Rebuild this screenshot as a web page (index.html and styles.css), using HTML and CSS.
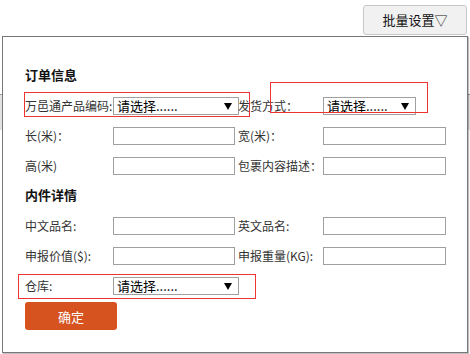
FILE: index.html
```html
<!DOCTYPE html>
<html lang="zh-CN">
<head>
<meta charset="utf-8">
<title>批量设置</title>
<link rel="stylesheet" href="styles.css">
</head>
<body>
<div class="page">
  <div class="backdrop"></div>
  <div class="toolbar">
    <button class="batch-btn">批量设置▽</button>
  </div>
  <div class="dialog">
    <div class="section-title">订单信息</div>
    <div class="form-grid">
      <label class="lbl">万邑通产品编码:</label>
      <div class="select sel-wide"><span>请选择......</span><svg class="arrow" width="8" height="7" viewBox="0 0 8 7"><path d="M0 0H8L4 7Z" fill="#000"/></svg></div>
      <label class="lbl">发货方式：</label>
      <div class="select sel-narrow"><span>请选择......</span><svg class="arrow" width="8" height="7" viewBox="0 0 8 7"><path d="M0 0H8L4 7Z" fill="#000"/></svg></div>

      <label class="lbl">长(米)：</label>
      <input class="inp inp1" type="text">
      <label class="lbl">宽(米)：</label>
      <input class="inp inp2" type="text">

      <label class="lbl">高(米)</label>
      <input class="inp inp1" type="text">
      <label class="lbl">包裹内容描述：</label>
      <input class="inp inp2" type="text">
    </div>
    <div class="section-title section-title2">内件详情</div>
    <div class="form-grid">
      <label class="lbl">中文品名:</label>
      <input class="inp inp1" type="text">
      <label class="lbl">英文品名:</label>
      <input class="inp inp2" type="text">

      <label class="lbl">申报价值($):</label>
      <input class="inp inp1" type="text">
      <label class="lbl">申报重量(KG):</label>
      <input class="inp inp2" type="text">

      <label class="lbl">仓库:</label>
      <div class="select sel-wide"><span>请选择......</span><svg class="arrow" width="8" height="7" viewBox="0 0 8 7"><path d="M0 0H8L4 7Z" fill="#000"/></svg></div>
    </div>
    <button class="ok-btn">确定</button>
  </div>
  <div class="mark mark1"></div>
  <div class="mark mark2"></div>
  <div class="mark mark3"></div>
</div>
</body>
</html>
```
FILE: styles.css
```css
* { box-sizing: border-box; }
html, body { margin: 0; padding: 0; background: #fff; }
body {
  font-family: "Noto Sans CJK SC", "Liberation Sans", sans-serif;
  font-size: 12px;
  color: #333;
}
.page {
  position: relative;
  width: 470px;
  height: 354px;
  overflow: hidden;
}
.backdrop {
  position: absolute;
  left: 0;
  right: 0;
  top: 94px;
  height: 36px;
  background: #e2e2e2;
  border-top: 1px solid #9a9a9a;
  z-index: 0;
}
.toolbar {
  display: flex;
  justify-content: flex-end;
  padding: 5px 3px 0 0;
  height: 36px;
}
.batch-btn {
  width: 104px;
  height: 30px;
  background: #f1f1f1;
  border: 1px solid #c8c8c8;
  border-radius: 3px;
  font-family: "Noto Sans CJK SC", sans-serif;
  font-size: 13px;
  color: #111;
  padding: 0;
  line-height: 28px;
}
.dialog {
  position: relative;
  z-index: 1;
  margin-left: 2px;
  width: 466px;
  height: 317px;
  background: #fff;
  border: 1px solid #777;
  box-shadow: 1px 1px 1px rgba(0,0,0,0.25);
  padding: 30px 0 0 22px;
}
.section-title {
  font-size: 13px;
  font-weight: bold;
  color: #111;
  line-height: 16px;
  height: 16px;
  margin-bottom: 8px;
}
.section-title2 {
  margin-top: 6px;
}
.form-grid {
  display: grid;
  grid-template-columns: 88px 125px 85px 125px;
  grid-auto-rows: 30px;
  align-items: center;
}
.lbl {
  white-space: nowrap;
  color: #333;
  line-height: 16px;
}
.inp {
  height: 18px;
  border: 1px solid #a0a0a0;
  background: #fff;
  padding: 0 3px;
  margin: 0;
  outline: none;
}
.inp1 { width: 122px; }
.inp2 { width: 123px; }
.select {
  display: flex;
  align-items: center;
  justify-content: space-between;
  height: 18px;
  border: 1px solid #a0a0a0;
  background: #fff;
  padding: 0 6px 0 3px;
  font-size: 13px;
  color: #000;
  line-height: 16px;
}
.sel-wide { width: 126px; }
.sel-narrow { width: 93px; }
.arrow { display: block; }
.ok-btn {
  display: block;
  margin-top: 1px;
  width: 92px;
  height: 28px;
  background: #d6521f;
  border: none;
  border-radius: 3px;
  color: #fff;
  font-family: "Noto Sans CJK SC", sans-serif;
  font-size: 13px;
  padding: 0;
}
.mark {
  position: absolute;
  border: 1px solid #ee3333;
  z-index: 2;
  pointer-events: none;
}
.mark1 { left: 24px; top: 92px; width: 226px; height: 25px; }
.mark2 { left: 270px; top: 82px; width: 158px; height: 31px; }
.mark3 { left: 18px; top: 274px; width: 238px; height: 25px; }
```
